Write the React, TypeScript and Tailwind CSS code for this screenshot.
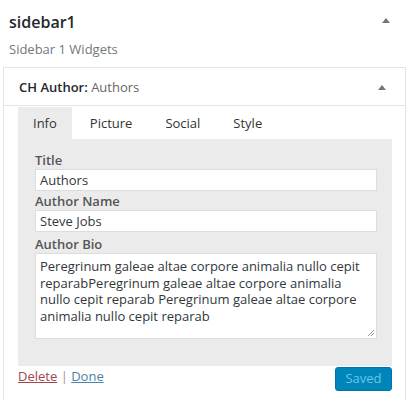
export default function App() {
  const tabs = ["Info", "Picture", "Social", "Style"];
  return (
    <div className="w-[410px] h-[400px] overflow-hidden bg-white text-[#444] font-['Open_Sans',sans-serif]">
      <div className="flex items-start justify-between pl-[9px] pr-[20px] pt-[10px]">
        <div>
          <h2 className="text-[16px] leading-[24px] font-semibold text-[#23282d]">sidebar1</h2>
          <p className="text-[13px] leading-[18px] mt-[6px] text-[#72777c]">Sidebar 1 Widgets</p>
        </div>
        <Caret className="mt-[8px]" />
      </div>

      <div className="ml-[3px] mt-[9px] w-[403px] h-[400px] border border-[#e5e5e5] shadow-[0_1px_1px_rgba(0,0,0,0.04)]">
        <div className="h-[38px] flex items-center justify-between pl-[15px] pr-[19px] pt-[2px] border-b border-[#e5e5e5]">
          <span className="text-[13px] text-[#23282d]">
            <span className="font-semibold">CH Author:</span>{" "}
            <span className="text-[#666]">Authors</span>
          </span>
          <Caret />
        </div>

        <div className="px-[14px]">
          <div className="flex gap-[3px] h-[33px] pt-[1px]">
            {tabs.map((t, i) => (
              <div
                key={t}
                className={
                  "px-[15px] pt-[2px] flex items-center text-[13px] text-[#333] " +
                  (i === 0 ? "bg-[#ebebeb]" : "")
                }
              >
                {t}
              </div>
            ))}
          </div>

          <div className="w-[374px] h-[227px] bg-[#ebebeb] pl-[17px] pr-[15px] pt-[12px]">
            <label className="block text-[13px] leading-[18px] font-semibold text-[#555]">Title</label>
            <div className="h-[22px] bg-white border border-[#ddd] px-[4px] text-[13px] leading-[20px] text-[#32373c]">
              Authors
            </div>
            <label className="block mt-[2px] text-[13px] leading-[17px] font-semibold text-[#555]">Author Name</label>
            <div className="h-[22px] bg-white border border-[#ddd] px-[4px] text-[13px] leading-[20px] text-[#32373c]">
              Steve Jobs
            </div>
            <label className="block mt-[4px] text-[13px] leading-[17px] font-semibold text-[#555]">Author Bio</label>
            <div className="relative h-[86px] bg-white border border-[#ddd] pl-[4px] pr-[6px] pt-[4px] text-[13px] leading-[16.5px] text-[#32373c]">
              Peregrinum galeae altae corpore animalia nullo cepit reparabPeregrinum galeae altae corpore animalia nullo cepit reparab Peregrinum galeae altae corpore animalia nullo cepit reparab
              <svg className="absolute right-[1px] bottom-[1px]" width="8" height="8" viewBox="0 0 8 8">
                <path d="M7 1L1 7M7 4L4 7" stroke="#999" strokeWidth="1" />
              </svg>
            </div>
          </div>

          <div className="flex items-start justify-between w-[374px] pt-[1px]">
            <div className="text-[13px] leading-[18px]">
              <a className="underline text-[#a0454f]">Delete</a>
              <span className="text-[#999]"> | </span>
              <a className="underline text-[#4a84a8]">Done</a>
            </div>
            <button className="h-[24px] w-[57px] rounded-[3px] bg-[#0085ba] border border-[#0073aa] text-[13px] text-[#66c6e4]">
              Saved
            </button>
          </div>
        </div>
      </div>
    </div>
  );
}

function Caret({ className = "" }: { className?: string }) {
  return (
    <svg className={className} width="8" height="5" viewBox="0 0 8 5">
      <path d="M0 5L4 0L8 5Z" fill="#72777c" />
    </svg>
  );
}
